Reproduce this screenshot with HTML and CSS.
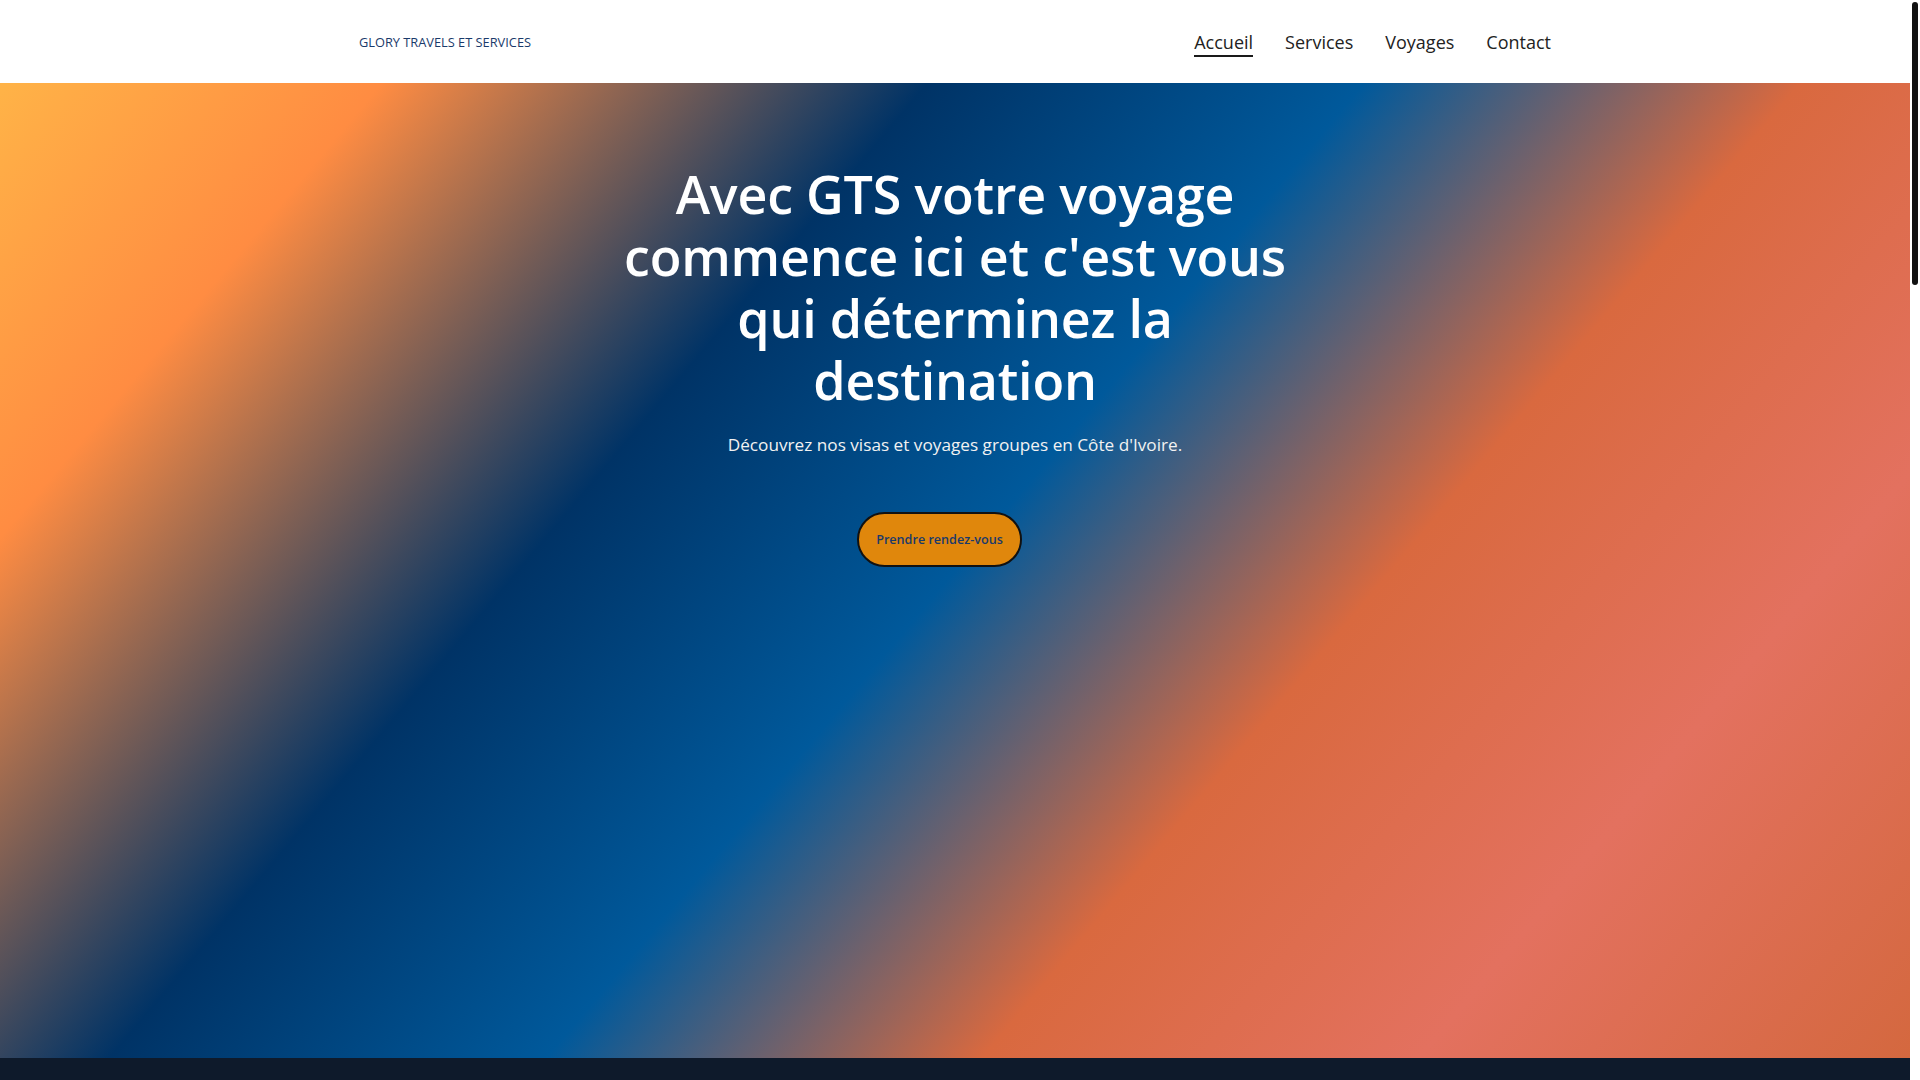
FILE: index.html
```html
<!DOCTYPE html>
<html lang="fr">
<head>
<meta charset="utf-8">
<title>Glory Travels et Services</title>
<link rel="stylesheet" href="styles.css">
</head>
<body>
<div class="layout">
  <div class="page">
    <header class="site-header">
      <div class="header-inner">
        <a class="logo" href="#">GLORY TRAVELS ET SERVICES</a>
        <nav class="nav">
          <a class="nav-link active" href="#">Accueil</a>
          <a class="nav-link" href="#">Services</a>
          <a class="nav-link" href="#">Voyages</a>
          <a class="nav-link" href="#">Contact</a>
        </nav>
      </div>
    </header>
    <main>
      <section class="hero">
        <div class="hero-content">
          <h1 class="hero-title">Avec GTS votre voyage commence ici et c'est vous qui déterminez la destination</h1>
          <p class="hero-sub">Découvrez nos visas et voyages groupes en Côte d'Ivoire.</p>
          <a class="cta" href="#">Prendre rendez-vous</a>
        </div>
      </section>
      <section class="next-section">
        <div class="next-inner"></div>
      </section>
    </main>
  </div>
  <div class="scroll-rail" aria-hidden="true">
    <div class="scroll-thumb"></div>
  </div>
</div>
</body>
</html>
```

FILE: styles.css
```css
html, body {
  margin: 0;
  padding: 0;
}
body {
  font-family: "Open Sans", "Liberation Sans", sans-serif;
  background: #ffffff;
  color: #222;
}
::-webkit-scrollbar {
  width: 0;
}
.layout {
  display: flex;
  align-items: stretch;
}
.page {
  flex: 1;
  min-width: 0;
}
.scroll-rail {
  width: 10px;
  flex: 0 0 10px;
  background: #ffffff;
  display: flex;
  flex-direction: column;
  align-items: center;
  padding-top: 2px;
  box-sizing: border-box;
}
.scroll-thumb {
  width: 6px;
  height: 283px;
  background: #111111;
  border-radius: 3px;
}

.site-header {
  height: 83px;
  background: #ffffff;
  display: flex;
  align-items: center;
}
.header-inner {
  width: 1192px;
  margin: 0 auto;
  display: flex;
  justify-content: space-between;
  align-items: center;
}
.logo {
  font-family: "Open Sans", sans-serif;
  font-size: 12.8px;
  color: #1a3a6b;
  text-decoration: none;
  padding-top: 1px;
}
.nav {
  display: flex;
  gap: 32px;
  padding-top: 4px;
}
.nav-link {
  font-family: "Open Sans", sans-serif;
  font-size: 18px;
  line-height: 22px;
  padding-bottom: 2px;
  color: #222222;
  text-decoration: none;
  border-bottom: 2px solid transparent;
}
.nav-link.active {
  border-bottom-color: #1a1a1a;
}

.hero {
  height: 975px;
  background: linear-gradient(130deg,
    #ffb347 0%,
    #ff8c42 14%,
    #003366 34%,
    #00599b 50%,
    #d9693f 66%,
    #e3715f 82%,
    #d4683f 100%);
  display: flex;
  justify-content: center;
}
.hero-content {
  padding-top: 80px;
  display: flex;
  flex-direction: column;
  align-items: center;
  text-align: center;
}
.hero-title {
  margin: 0;
  max-width: 700px;
  font-family: "Open Sans", sans-serif;
  font-weight: 600;
  font-size: 52px;
  line-height: 62px;
  color: #ffffff;
  letter-spacing: -0.2px;
}
.hero-sub {
  margin: 21px 0 0;
  font-family: "Open Sans", sans-serif;
  font-size: 17.2px;
  line-height: 26px;
  color: #f2f2f2;
}
.cta {
  margin-top: 54px;
  margin-right: 31px;
  box-sizing: border-box;
  height: 55px;
  padding: 0 17px;
  display: inline-flex;
  align-items: center;
  background: #e0870c;
  border: 2px solid #111111;
  border-radius: 28px;
  font-family: "Open Sans", sans-serif;
  font-weight: 600;
  font-size: 12.6px;
  color: #1a3a6b;
  text-decoration: none;
}

.next-section {
  background: #0e1a2b;
}
.next-inner {
  min-height: 3060px;
}
```
